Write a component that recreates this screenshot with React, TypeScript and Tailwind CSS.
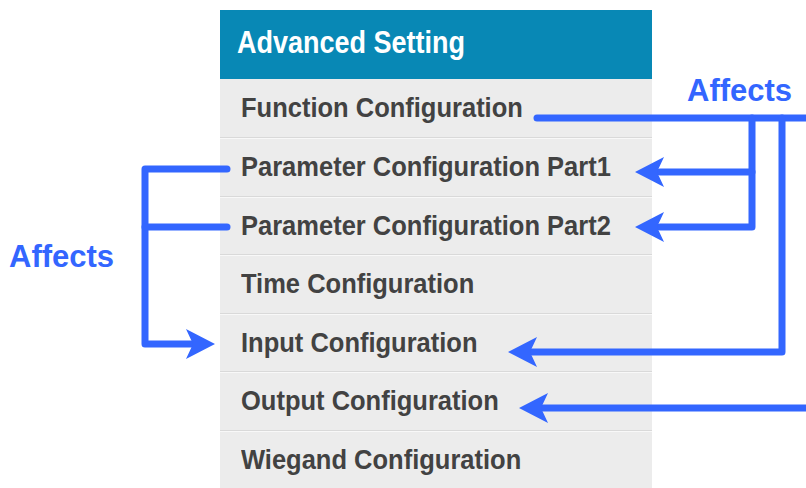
import React from 'react'

const items = [
  'Function Configuration',
  'Parameter Configuration Part1',
  'Parameter Configuration Part2',
  'Time Configuration',
  'Input Configuration',
  'Output Configuration',
  'Wiegand Configuration',
]

const BLUE = '#3366ff'

// arrowhead pointing left (dir = -1) or right (dir = 1), tip at x,y
const head = (x: number, y: number, dir: number) => {
  const b = x - dir * 29
  const n = x - dir * 22
  return `${x},${y} ${b},${y - 15} ${n},${y} ${b},${y + 15}`
}

const Arrows = () => (
  <svg
    className="absolute inset-0 pointer-events-none"
    width={806}
    height={488}
    viewBox="0 0 806 488"
    fill="none"
  >
    <g stroke={BLUE} strokeWidth={7} strokeLinecap="round" strokeLinejoin="round">
      {/* right side */}
      <path d="M537 118 H812" />
      <path d="M752 118 V227 H660" />
      <path d="M752 172 H660" />
      <path d="M782 118 V352 H532" />
      <path d="M812 408 H543" />
      {/* left bracket */}
      <path d="M227 169 H145 V344 H192" />
      <path d="M145 227 H227" />
    </g>
    <g fill={BLUE}>
      <polygon points={head(635, 172, -1)} />
      <polygon points={head(635, 227, -1)} />
      <polygon points={head(508, 352, -1)} />
      <polygon points={head(519, 408, -1)} />
      <polygon points={head(215, 344, 1)} />
    </g>
  </svg>
)

const App = () => {
  return (
    <div
      className="relative w-[806px] h-[488px] overflow-hidden bg-white flex"
      style={{ fontFamily: '"Liberation Sans", Arial, sans-serif' }}
    >
      {/* left label */}
      <div className="w-[220px] shrink-0 pl-[9px] pt-[239px]">
        <span className="block text-[31px] leading-[36px] font-bold text-[#3366ff]">Affects</span>
      </div>

      {/* menu panel */}
      <div className="w-[432px] shrink-0 mt-[10px] bg-[#ececec] flex flex-col">
        <div className="h-[72px] bg-[#0888b5] flex items-center pl-[17px] pb-[3px]">
          <span className="inline-block scale-y-[1.13] text-[27px] font-bold text-white">Advanced Setting</span>
        </div>
        {items.map((label, i) => (
          <div
            key={label}
            className={`h-[58.5px] shrink-0 pt-[13px] pl-[21px] ${
              i === 0 ? '' : 'border-t border-[#d9d9d9] shadow-[inset_0_1px_0_#f8f8f8]'
            }`}
          >
            <span className="inline-block scale-y-110 text-[25.5px] leading-[30px] font-bold text-[#424242]">
              {label}
            </span>
          </div>
        ))}
      </div>

      {/* right label */}
      <div className="flex-1 pl-[35px] pt-[73px]">
        <span className="block text-[31px] leading-[36px] font-bold text-[#3366ff]">Affects</span>
      </div>

      <Arrows />
    </div>
  )
}

export default App
